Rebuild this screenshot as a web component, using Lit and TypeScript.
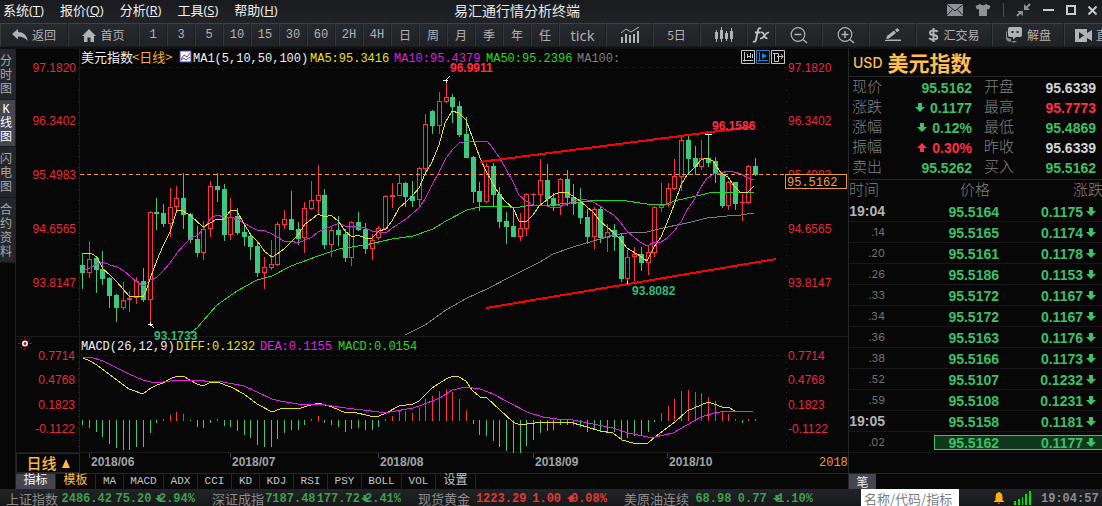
import { LitElement, html, svg, css } from "lit";
import { customElement, state } from "lit/decorators.js";
import { classMap } from "lit/directives/class-map.js";

type Candle = [string, number, number, number, number];

const STEP = 6.73;
const FIRST_X = 82.7;
const ZERO_Y = 420;

/* kind, high, body top, body bottom, low */
const CANDLES: Candle[] = [
  ["g", 253, 265, 273, 289], ["r", 241, 259, 273, 278], ["g", 257, 258, 270, 293], ["g", 251, 269, 279, 285],
  ["g", 277, 278, 296, 308], ["g", 294, 295, 308, 322], ["r", 282, 300, 308, 310], ["r", 291, 298, 300, 312],
  ["r", 277, 281, 298, 304], ["g", 268, 281, 300, 302], ["r", 211, 212, 300, 322], ["g", 198, 212, 214, 230],
  ["g", 204, 213, 224, 227], ["r", 188, 207, 224, 237], ["r", 186, 198, 207, 210], ["g", 173, 198, 215, 229],
  ["g", 213, 214, 240, 243], ["g", 226, 239, 253, 257], ["r", 221, 229, 253, 260], ["r", 181, 186, 229, 237],
  ["g", 173, 186, 190, 202], ["g", 184, 189, 235, 241], ["r", 198, 217, 235, 240], ["g", 208, 216, 233, 235],
  ["g", 225, 232, 237, 246], ["g", 234, 236, 247, 260], ["g", 241, 246, 273, 277], ["r", 257, 267, 273, 289],
  ["r", 240, 264, 268, 270], ["r", 222, 224, 265, 266], ["r", 210, 219, 225, 229], ["g", 191, 219, 230, 230],
  ["g", 222, 229, 239, 245], ["r", 202, 208, 238, 253], ["r", 181, 200, 209, 210], ["r", 165, 195, 201, 215],
  ["g", 189, 195, 245, 249], ["r", 226, 230, 245, 257], ["g", 216, 230, 235, 246], ["g", 229, 234, 258, 262],
  ["r", 221, 222, 258, 266], ["g", 212, 222, 230, 231], ["g", 223, 229, 249, 254], ["r", 234, 240, 249, 260],
  ["r", 226, 228, 238, 240], ["r", 195, 196, 229, 229], ["r", 183, 195, 197, 208], ["r", 174, 183, 196, 196],
  ["g", 182, 183, 197, 207], ["g", 181, 196, 201, 207], ["r", 167, 168, 200, 206], ["r", 114, 124, 169, 172],
  ["g", 110, 111, 126, 134], ["r", 92, 101, 126, 134], ["r", 80, 97, 102, 103], ["g", 94, 97, 107, 123],
  ["g", 101, 106, 135, 137], ["g", 117, 134, 158, 158], ["g", 156, 157, 192, 203], ["g", 182, 191, 202, 211],
  ["r", 163, 166, 202, 203], ["g", 163, 166, 195, 207], ["g", 187, 194, 222, 228], ["g", 212, 221, 227, 244],
  ["g", 209, 226, 237, 237], ["r", 213, 228, 237, 241], ["r", 193, 194, 229, 236], ["r", 193, 194, 195, 205],
  ["r", 159, 180, 195, 204], ["g", 164, 180, 199, 206], ["g", 193, 198, 206, 211], ["r", 178, 179, 206, 215],
  ["g", 170, 179, 198, 206], ["g", 184, 197, 204, 215], ["g", 188, 202, 218, 224], ["g", 209, 217, 237, 244],
  ["r", 207, 209, 237, 249], ["g", 206, 209, 238, 243], ["r", 224, 232, 238, 252], ["g", 224, 230, 237, 251],
  ["g", 234, 236, 279, 282], ["r", 250, 257, 279, 282], ["r", 247, 254, 257, 281], ["g", 247, 254, 263, 271],
  ["r", 245, 252, 263, 275], ["r", 206, 207, 253, 257], ["r", 183, 205, 208, 212], ["r", 183, 188, 205, 207],
  ["r", 159, 176, 189, 190], ["r", 136, 140, 177, 191], ["g", 136, 140, 159, 175], ["g", 146, 158, 167, 175],
  ["r", 140, 158, 167, 170], ["g", 134, 158, 163, 167], ["g", 157, 161, 174, 183], ["g", 172, 174, 206, 208],
  ["r", 181, 182, 206, 210], ["g", 182, 182, 204, 210], ["r", 194, 202, 203, 221], ["r", 165, 166, 203, 204],
  ["g", 158, 166, 175, 176],
];

/* end of each histogram bar, measured from the zero line */
const MACD = [
  425, 428, 432, 437, 444, 448, 450, 450, 447, 447, 433, 423, 419, 415, 412, 414, 421, 427, 428, 423, 419,
  426, 427, 431, 435, 438, 445, 447, 447, 439, 433, 430, 430, 425, 419, 416, 423, 425, 427, 432, 429, 428,
  430, 430, 427, 419, 416, 411, 411, 413, 408, 399, 396, 391, 389, 392, 399, 410, 424, 435, 436, 441, 447,
  451, 453, 453, 446, 440, 433, 431, 430, 425, 425, 425, 427, 432, 430, 432, 432, 432, 439, 438, 436, 435,
  432, 422, 413, 406, 399, 391, 390, 392, 393, 397, 401, 412, 414, 419, 423, 419, 419,
];

const MA5 =
  "83,254 89,253 92,254 97,257 103,269 110,275 117,282 129,296 143,297 146,291 150,279 157,260 163,246 170,232 177,210 183,211 191,216 203,227 217,219 224,219 231,210 237,211 244,224 251,235 258,242 265,252 272,257 277,254 284,249 291,242 298,235 305,224 312,219 318,214 325,217 331,215 339,222 345,231 352,237 358,235 365,238 372,238 379,231 386,229 392,221 399,208 406,202 413,195 419,188 425,174 432,162 439,145 445,123 452,111 459,113 466,120 473,139 480,158 486,171 492,182 499,194 506,202 513,208 519,221 526,222 533,215 539,206 553,195 560,192 567,192 580,201 593,212 600,221 607,227 614,233 620,239 627,248 640,256 647,261 654,247 661,237 667,223 674,205 681,185 687,175 694,168 701,160 707,158 713,161 721,173 728,177 734,186 741,193 748,192 754,186";
const MA10 =
  "83,271 90,268 97,264 103,262 110,265 117,267 124,271 131,277 137,282 144,286 150,280 157,277 163,271 170,263 177,253 184,245 191,238 198,235 204,228 211,218 217,215 224,217 231,217 237,219 244,223 251,227 257,230 265,231 272,234 284,241 291,241 298,243 312,237 318,232 325,229 339,223 345,226 358,227 365,228 372,231 386,233 392,228 406,219 419,208 425,199 432,185 439,172 446,158 453,149 459,143 470,141 487,141 492,147 499,157 506,169 513,182 519,195 526,201 533,205 540,205 547,206 553,208 560,207 567,204 574,201 580,199 587,200 593,202 600,206 607,211 614,215 620,222 627,231 634,237 640,242 647,246 654,242 661,242 667,238 674,231 681,222 687,210 694,200 701,187 707,178 714,174 721,173 728,171 734,172 741,174 748,178 754,180";
const MA50 =
  "190,333 197,328 203,321 217,305 237,291 257,280 272,276 291,266 318,256 339,249 365,245 392,239 413,236 433,229 446,221 467,210 479,207 492,206 510,207 520,207 533,205 550,205 560,204 580,202 600,200 620,200 647,204 667,204 674,201 687,198 701,195 713,192 754,192";
const MA100 =
  "405,335 425,325 446,310 467,298 487,289 510,277 530,267 540,262 553,254 573,247 593,241 614,235 627,233 647,232 663,228 687,223 707,218 727,216 741,215 754,213";
const DIFF =
  "83,358 90,361 97,365 110,375 129,389 143,394 151,388 157,385 163,383 170,379 177,376 183,376 190,380 197,384 203,386 211,382 218,382 225,385 231,387 244,394 257,404 272,412 280,409 292,408 298,409 307,406 319,403 332,407 346,413 353,412 370,416 379,416 386,413 399,406 413,404 419,401 425,395 432,388 446,379 453,376 459,377 466,381 472,390 480,397 487,398 500,410 513,422 520,425 535,423 560,422 573,423 587,427 600,431 613,433 622,440 633,443 648,443 655,437 667,428 675,422 687,411 701,405 708,402 714,404 722,407 728,407 735,411 742,412 748,411 753,411";
const DEA =
  "83,357 90,357 103,361 117,368 129,374 143,380 151,382 163,382 177,380 198,380 211,382 218,381 244,386 257,392 272,399 280,401 298,404 319,404 332,406 346,408 379,412 390,412 413,408 419,406 440,398 452,390 466,387 480,389 493,394 508,402 527,412 543,417 557,419 573,420 593,424 613,428 628,433 648,437 655,437 673,433 687,425 701,417 714,413 727,411 753,411";

const PRICE_AXIS: [string, number][] = [
  ["97.1820", 72], ["96.3402", 125], ["95.4983", 179], ["94.6565", 233], ["93.8147", 287],
];
const MACD_AXIS: [string, number][] = [["0.7714", 360], ["0.4768", 384], ["0.1823", 409], ["-0.1122", 433]];
const MONTHS: [string, number][] = [
  ["2018/06", 89], ["2018/07", 230], ["2018/08", 378], ["2018/09", 533], ["2018/10", 667],
];

const TICKS: [string, string, string][] = [
  ["19:04", "95.5164", "0.1175"], [".14", "95.5165", "0.1174"], [".20", "95.5161", "0.1178"],
  [".26", "95.5186", "0.1153"], [".33", "95.5172", "0.1167"], [".34", "95.5172", "0.1167"],
  [".36", "95.5163", "0.1176"], [".38", "95.5166", "0.1173"], [".52", "95.5107", "0.1232"],
  [".59", "95.5108", "0.1231"], ["19:05", "95.5158", "0.1181"], [".02", "95.5162", "0.1177"],
];

const QUOTES: [string, string, string, string][] = [
  ["现价", "95.5162", "down", ""], ["开盘", "95.6339", "flat", ""],
  ["涨跌", "0.1177", "down", "down"], ["最高", "95.7773", "up", ""],
  ["涨幅", "0.12%", "down", "down"], ["最低", "95.4869", "down", ""],
  ["振幅", "0.30%", "up", "up"], ["昨收", "95.6339", "flat", ""],
  ["卖出", "95.5262", "down", ""], ["买入", "95.5162", "down", ""],
];

const TICKER: [string, string, string, string, string][] = [
  ["上证指数", "2486.42", "75.20", "2.94%", "down"],
  ["深证成指", "7187.48", "177.72", "2.41%", "down"],
  ["现货黄金", "1223.29", "1.00", "0.08%", "up"],
  ["美原油连续", "68.98", "0.77", "1.10%", "down"],
];

const arrow = (dir: string) => html`<svg class="arrow" width="10" height="9" viewBox="0 0 10 9" aria-hidden="true">
  <path fill="currentColor" d=${dir === "up" ? "M5 0 L10 5 H7 V9 H3 V5 H0 Z" : "M3 0 H7 V4 H10 L5 9 L0 4 H3 Z"} />
</svg>`;

@customElement("menu-bar")
export class MenuBar extends LitElement {
  static styles = css`
    :host {
      display: grid;
      grid-template-columns: 1fr auto 1fr;
      align-items: center;
      height: 23px;
      padding: 0 5px 0 3px;
      box-sizing: border-box;
      background: linear-gradient(#191a1d, #222326);
      color: #f0f0f0;
      font: 13px/20px "Open Sans", "Noto Sans CJK SC", sans-serif;
    }
    nav { display: flex; gap: 16px; }
    nav a { color: inherit; text-decoration: none; white-space: nowrap; padding-bottom: 4px; }
    h1 { margin: 0; padding-right: 66px; font: 14px/20px "Noto Sans CJK SC", sans-serif; color: #e8e8e8; padding-bottom: 4px; }
    .tools { display: flex; justify-content: flex-end; align-items: center; gap: 12px; padding-bottom: 4px; }
    button { display: flex; border: 0; padding: 0; background: none; color: #c9c9cb; }
    .rule { width: 1px; height: 14px; background: #4a4b50; }
  `;

  render() {
    const menus = [["系统", "T"], ["报价", "Q"], ["分析", "R"], ["工具", "S"], ["帮助", "H"]];
    return html`
      <nav>${menus.map(([n, k]) => html`<a href="#">${n}(<u>${k}</u>)</a>`)}</nav>
      <h1>易汇通行情分析终端</h1>
      <div class="tools">
        <button aria-label="邮件"><svg width="16" height="12" viewBox="0 0 16 12"><path fill="#8f9196" d="M0 0H16V12H0Z" /><path fill="none" stroke="#222327" d="M0 .5L8 7L16 .5M0 11.5L5.5 5.5M16 11.5L10.500 5.500" /></svg></button>
        <button aria-label="皮肤"><svg width="16" height="14" viewBox="0 0 16 14"><path fill="#8f9196" d="M5 1Q8 3.500 11 1L15.500 3L14 6.500L12 6V13H4V6L2 6.500L.5 3Z" /></svg></button>
        <span class="rule"></span>
        <button aria-label="收起"><svg width="15" height="14" viewBox="0 0 15 14"><path fill="none" stroke="#8f9196" stroke-width="2" d="M14 1L10 5M1 13L5 9" /><path fill="#8f9196" d="M8 1V7H14ZM7 13V8H1Z" /></svg></button>
        <button aria-label="最小化"><svg width="11" height="10" viewBox="0 0 11 10"><path fill="currentColor" d="M0 4H11V6H0Z" /></svg></button>
        <button aria-label="最大化"><svg width="10" height="10" viewBox="0 0 10 10"><path fill="none" stroke="currentColor" stroke-width="2" d="M1 1H9V9H1Z" /></svg></button>
        <button aria-label="关闭"><svg width="9" height="9" viewBox="0 0 9 9"><path stroke="currentColor" stroke-width="2" d="M.5 .5L8.500 8.500M8.500 .5L.5 8.500" /></svg></button>
      </div>
    `;
  }
}

@customElement("tool-bar")
export class ToolBar extends LitElement {
  static styles = css`
    :host {
      display: flex;
      height: 26px;
      box-sizing: border-box;
      padding-bottom: 1px;
      background: #101113;
      overflow: hidden;
      border-bottom: 1px solid #101113;
    }
    button {
      flex: none;
      display: flex;
      align-items: center;
      justify-content: center;
      gap: 4px;
      box-sizing: border-box;
      width: 28px;
      height: 24px;
      padding: 0;
      border: 1px solid #1b1c1f;
      border-top-color: #404145;
      border-left-color: #37393d;
      background: linear-gradient(#26292e, #202226);
      color: #b2b2b2;
      font: 12px/20px "Noto Sans CJK SC", sans-serif;
      white-space: nowrap;
    }
    .mid { width: 47px; }
    .back { width: 68px; }
    .home { width: 71px; }
    .trade { width: 76px; }
    .explain { width: 72px; }
    .tick { font: 15px/20px "Open Sans", sans-serif; }
    .live { width: 76px; justify-content: flex-start; padding-left: 10px; }
    .num { font: 12px/20px "Liberation Mono", monospace; }
  `;

  render() {
    const numeric = ["1", "3", "5", "10", "15", "30", "60", "2H", "4H"];
    const spans = ["日", "周", "月", "季", "年", "任"];
    return html`
      <button class="back"><svg width="16" height="12" viewBox="0 0 16 12"><path fill="#b2b2b2" d="M0 5L6 0V3Q14 3 16 12Q12 7.500 6 7.500V10.500Z" /></svg>返回</button>
      <button class="home"><svg width="14" height="13" viewBox="0 0 14 13"><path fill="#b2b2b2" d="M7 0L14 7H12V13H8.500V8.500H5.500V13H2V7H0Z" /></svg>首页</button>
      ${numeric.map((n) => html`<button class="num">${n}</button>`)}
      ${spans.map((n) => html`<button>${n}</button>`)}
      <button class="mid tick">tick</button>
      <button class="mid" aria-label="指标图"><svg width="20" height="16" viewBox="0 0 20 16"><path fill="#b2b2b2" d="M1 10H3V16H1ZM5 7H7V16H5ZM9 8H11V16H9ZM13 7H15V16H13ZM17 4H19V16H17Z" /><path fill="none" stroke="#b2b2b2" d="M1 6L6 2L11 5L19 0" /></svg></button>
      <button class="mid">5日</button>
      <button class="mid" aria-label="K线"><svg width="20" height="16" viewBox="0 0 20 16"><path fill="#b2b2b2" d="M1 5H4V12H1ZM6 3H9V12H6ZM11 6H14V12H11ZM16 4H19V12H16Z" /><path stroke="#b2b2b2" d="M2.500 3V15M7.500 0V15M12.500 4V14M17.500 1V15" /></svg></button>
      <button aria-label="公式"><svg width="18" height="16" viewBox="0 0 18 16"><path fill="none" stroke="#c4c4c4" stroke-width="1.800" d="M9 1.500Q6.500 0 5.800 4L4.200 12Q3.600 15.500 1 14.500M3 5.500H8.500" /><path fill="none" stroke="#c4c4c4" stroke-width="1.600" d="M9 5.500Q11 4.500 12 8T15.500 11.500M17 5.500Q15 5 12.500 8.500T8 11.500" /></svg></button>
      <button class="mid" aria-label="缩小"><svg width="18" height="17" viewBox="0 0 18 17"><circle cx="8" cy="7.500" r="6.800" fill="none" stroke="#b2b2b2" stroke-width="1.200" /><path stroke="#b2b2b2" stroke-width="1.500" d="M4.500 7.500H11.500M13 12.500L17 16" /></svg></button>
      <button class="mid" aria-label="放大"><svg width="18" height="17" viewBox="0 0 18 17"><circle cx="8" cy="7.500" r="6.800" fill="none" stroke="#b2b2b2" stroke-width="1.200" /><path stroke="#b2b2b2" stroke-width="1.500" d="M4.500 7.500H11.500M8 4V11M13 12.500L17 16" /></svg></button>
      <button class="mid" aria-label="画线"><svg width="16" height="14" viewBox="0 0 16 14"><path fill="#b2b2b2" d="M1 11L2 8L9 2.500L11 5L4 10.500ZM10 1.800L12.500 0L14.500 2.500L12 4.300ZM6 11.500H16V13H0V12Z" /></svg></button>
      <button class="trade"><svg width="11" height="14" viewBox="0 0 11 14"><path fill="none" stroke="#b2b2b2" stroke-width="2" d="M9.500 4Q9 2.500 5.500 2.500T2 4.700T5.500 7T9.300 9.300T5.500 11.500T1.500 9.700M5.500 0V14" /></svg>汇交易</button>
      <button class="explain"><svg width="18" height="16" viewBox="0 0 18 16"><path fill="#8a8a8a" d="M2 4V9.500Q2 11.500 4.500 11.500H6V14H12L9 16L7 14.500H3L1 12V5Z" /><path fill="#b2b2b2" d="M5 0H15Q17 0 17 2V8Q17 10 15 10H11L8 12.500V10H5Q3 10 3 8V2Q3 0 5 0Z" /><path fill="#24262a" d="M6.500 4H8.500V6H6.500ZM11.500 4H13.500V6H11.500Z" /></svg>解盘</button>
      <button class="live"><svg width="17" height="13" viewBox="0 0 17 13"><path fill="#b2b2b2" d="M0 0H12V4L17 1V12L12 9V13H0Z" /><path fill="#24262a" d="M4 3L9 6.500L4 10Z" /></svg>直播</button>
    `;
  }
}

@customElement("price-chart")
export class PriceChart extends LitElement {
  static styles = css`
    :host { display: block; position: relative; }
    .plot { display: block; width: 100%; height: auto; }
    .axis { font: 12px "Liberation Sans", sans-serif; fill: #e8283c; }
    .mark { font: bold 12px "Liberation Sans", sans-serif; }
    .legend { font: 12px "Liberation Mono", "Noto Sans CJK SC", monospace; }
    .name { font: 13px "Noto Sans CJK SC", sans-serif; }
    .line { fill: none; stroke-width: 1; }
    .crisp { shape-rendering: crispEdges; }
    .modes { position: absolute; top: 1px; right: 63px; display: flex; gap: 1px; }
    .modes button { display: flex; padding: 0; border: 0; background: none; color: #c8c8c8; }
    .modes .on { color: #1b86d8; }
  `;

  private x(i: number) {
    return Math.round(FIRST_X + STEP * i - 0.5);
  }

  private candle(c: Candle, i: number) {
    const [kind, high, top, bottom, low] = c;
    const x = this.x(i);
    if (kind === "g")
      return svg`<path fill="#3cc87e" d="M${x} ${high}h1V${low}h-1ZM${x - 2} ${top}h5V${Math.max(bottom, top + 1)}h-5Z"/>`;
    if (bottom - top < 3)
      return svg`<path fill="#ff2f46" d="M${x} ${high}h1V${low}h-1ZM${x - 2} ${top}h5v${bottom - top}h-5Z"/>`;
    return svg`<path fill="#ff2f46" d="M${x} ${high}h1V${top}h-1ZM${x} ${bottom}h1V${low}h-1Z"/>
      <rect x=${x - 1.5} y=${top + 0.5} width="4" height=${bottom - top - 1} fill="none" stroke="#ff2f46"/>`;
  }

  private bar(end: number, i: number) {
    const up = end < ZERO_Y;
    return up
      ? svg`<rect x=${this.x(i)} y=${end} width="1" height=${ZERO_Y + 1 - end} fill="#ff2f46"/>`
      : svg`<rect x=${this.x(i)} y=${ZERO_Y} width="1" height=${end - ZERO_Y} fill="#3cc87e"/>`;
  }

  render() {
    return html`
      <svg class="plot" viewBox="16 49 832 404" role="img" aria-label="美元指数日线">
        <g class="crisp" stroke="#1c1c1c">
          <path d="M16 336.500H848M16 452.500H848M79.500 49V453" />
          <path stroke="#191919" stroke-dasharray="4 4" d="M80 67.500H786M80 355.500H786" />
          <path stroke="#303030" stroke-dasharray="1 10" d="M78.500 68V330M786.500 68V330" />
          <path stroke="#303030" stroke-dasharray="1 5" d="M78.500 356V450M786.500 356V450" />
        </g>
        ${PRICE_AXIS.map(([t, y]) => svg`<text class="axis" x="76" y=${y} text-anchor="end">${t}</text><text class="axis" x="788" y=${y}>${t}</text>`)}
        ${MACD_AXIS.map(([t, y]) => svg`<text class="axis" x="75" y=${y} text-anchor="end">${t}</text><text class="axis" x="788" y=${y}>${t}</text>`)}

        <g class="crisp">
          ${CANDLES.map((c, i) => this.candle(c, i))}
          ${MACD.map((v, i) => this.bar(v, i))}
          <path class="line" stroke="#f49a2e" stroke-dasharray="4 3" d="M80 174.500H786" />
          <polyline class="line" stroke="#7e7e7e" points=${MA100} />
          <polyline class="line" stroke="#20dc20" points=${MA50} />
          <polyline class="line" stroke="#dc20dc" points=${MA10} />
          <polyline class="line" stroke="#e8e020" points=${MA5} />
          <polyline class="line" stroke="#e8e020" points=${DIFF} />
          <polyline class="line" stroke="#e81ee8" points=${DEA} />
          <path fill="none" stroke="#ff0000" stroke-width="2" d="M480 162L750 127M486 308L776 259" />
          <path stroke="#fff" d="M443 80.500H448M446.500 79V83M447 79L450 76M148 324.500H153M150.500 322V326M151 325L154 328M705 134.500H712M627.500 281V284" />
        </g>

        <text class="mark" fill="#ff2f46" x="450" y="72">96.9911</text>
        <text class="mark" fill="#ff2f46" x="712" y="130">96.1586</text>
        <text class="mark" fill="#34b878" x="154" y="340">93.1733</text>
        <text class="mark" fill="#34b878" x="632" y="295">93.8082</text>

        <rect x="785.500" y="174.500" width="61" height="14" fill="#070707" stroke="#f49a2e" />
        <text class="legend" fill="#f4a040" x="787" y="186">95.5162</text>

        <text class="name" fill="#f0f0f0" x="81" y="62">美元指数</text>
        <text class="name" fill="#f0b040" x="132" y="62">&lt;日线&gt;</text>
        <rect x="180" y="51" width="11" height="11" fill="#fff" stroke="#3050a0" />
        <path fill="none" stroke="#e02020" d="M181 59L184 55L187 57L190 53" />
        <path fill="none" stroke="#3050c0" d="M181 60L184 58L186 60L190 57" />
        <text class="legend" fill="#f0f0f0" x="193" y="62">MA1(5,10,50,100)</text>
        <text class="legend" fill="#e8e020" x="310" y="62">MA5:95.3416</text>
        <text class="legend" fill="#dc20dc" x="394" y="62">MA10:95.4379</text>
        <text class="legend" fill="#20dc20" x="486" y="62">MA50:95.2396</text>
        <text class="legend" fill="#7e7e7e" x="577" y="62">MA100:</text>

        <text class="legend" fill="#f0f0f0" x="81" y="350">MACD(26,12,9)</text>
        <text class="legend" fill="#e8e020" x="176" y="350">DIFF:0.1232</text>
        <text class="legend" fill="#e81ee8" x="260" y="350">DEA:0.1155</text>
        <text class="legend" fill="#20dc20" x="338" y="350">MACD:0.0154</text>

        <circle cx="25" cy="343.500" r="3" fill="#fff" />
        <circle cx="25" cy="343.500" r="1.500" fill="#f00" />
        <path stroke="#f00" d="M25 337V339M25 348V350M18.500 343.500H20.500M29.500 343.500H31.500M20.500 339L21.800 340.300M28.200 346.700L29.500 348M29.500 339L28.200 340.300M21.800 346.700L20.500 348" />
      </svg>
      <div class="modes">
        <button aria-label="模式一"><svg width="14" height="14" viewBox="0 0 14 14"><path fill="none" stroke="currentColor" d="M.5 .5H13.500V13.500H.5ZM3.500 2V11.500M2 10.500H12M6.500 4V8M9.500 3V8M6 6.500H9M11.500 4V8" /></svg></button>
        <button class="on" aria-label="模式二"><svg width="14" height="14" viewBox="0 0 14 14"><path fill="none" stroke="currentColor" d="M.5 .5H13.500V13.500H.5ZM3.500 2V11.500M2 10.500H12" /><path fill="currentColor" d="M6 3L11 6L6 9Z" /></svg></button>
        <button aria-label="模式三"><svg width="14" height="14" viewBox="0 0 14 14"><path fill="none" stroke="currentColor" d="M.5 .5H13.500V13.500H.5ZM3.500 3V11.500H7.500V3.500H2M6 6.500H12M10 4L12 6.500L10 9" /></svg></button>
      </div>
    `;
  }
}

@customElement("quote-panel")
export class QuotePanel extends LitElement {
  static styles = css`
    :host {
      display: flex;
      flex-direction: column;
      box-sizing: border-box;
      border-left: 1px solid #262626;
      background: #070707;
      font: 14px/20px "Noto Sans CJK SC", sans-serif;
      color: #808080;
      overflow: hidden;
    }
    .up { color: #ff2f46; }
    .down { color: #3cc068; }
    .flat { color: #d4d4d4; }
    h2 {
      display: flex;
      align-items: center;
      gap: 5px;
      margin: 0;
      padding-left: 4px;
      height: 27px;
      border-bottom: 1px solid #262626;
      color: #ffbe50;
      font: bold 21px/25px "Noto Sans CJK SC", sans-serif;
    }
    h2 small { font: 500 14px/25px "Inter", sans-serif; }
    dl {
      display: grid;
      grid-template-columns: 36px 84px 1fr 78px;
      margin: 0;
      padding: 0 6px 2px 3px;
      border-bottom: 1px solid #262626;
    }
    dt { font-weight: 300; font-size: 15px; height: 20px; line-height: 18px; }
    dt.second { padding-left: 12px; }
    dd {
      display: flex;
      justify-content: flex-end;
      align-items: center;
      gap: 5px;
      margin: 0;
      height: 20px;
      padding-top: 1px;
      box-sizing: border-box;
      font: bold 14px/20px "Liberation Sans", sans-serif;
    }
    table { width: 100%; border-collapse: collapse; table-layout: fixed; }
    th { padding: 0; height: 21px; line-height: 18px; font-size: 15px; font-weight: 300; text-align: left; white-space: nowrap; vertical-align: top; }
    th.price { padding-left: 26px; }
    th.change { padding-left: 74px; }
    td { padding: 0; height: 20px; border-bottom: 1px solid #171717; text-align: right; }
    .time { width: 36px; }
    .gap { width: 49px; }
    .price { width: 65px; }
    .change { width: 84px; }
    td.time { font: 11px/18px "Inter", "Liberation Sans", sans-serif; color: #707070; }
    td.full { font: bold 14px/20px "Liberation Sans", sans-serif; color: #b4b4b4; }
    .cell { font: bold 14px/15px "Liberation Sans", sans-serif; color: #3cc068; height: 13px; border: 1px solid transparent; border-width: 1px 0; }
    .dir .cell { text-align: left; padding-left: 3px; line-height: 12px; }
    .latest .cell { background: #10381a; border-color: #3cc068; }
    .latest .price .cell { border-left-width: 1px; }
    .foot { display: flex; margin-top: auto; border-top: 1px solid #262626; }
    .foot button { width: 27px; height: 15px; padding: 0; border: 0; background: #44454f; color: #f0f0f0; font: 12px/14px "Noto Sans CJK SC", sans-serif; }
  `;

  render() {
    return html`
      <h2><small>USD</small>美元指数</h2>
      <dl>
        ${QUOTES.map(([label, value, tone, dir], i) => html`
          <dt class=${classMap({ second: i % 2 === 1 })}>${label}</dt>
          <dd class=${tone}>${dir ? arrow(dir) : ""}${value}</dd>`)}
      </dl>
      <table>
        <colgroup><col class="time" /><col class="gap" /><col class="price" /><col class="change" /><col /></colgroup>
        <thead>
          <tr><th class="time" colspan="2">时间</th><th class="price">价格</th><th class="change">涨跌</th><th></th></tr>
        </thead>
        <tbody>
          ${TICKS.map(([time, price, change], i) => html`
            <tr class=${classMap({ latest: i === TICKS.length - 1 })}>
              <td class=${classMap({ time: true, full: time.includes(":") })}>${time}</td>
              <td></td>
              <td class="price"><div class="cell">${price}</div></td>
              <td class="change"><div class="cell">${change}</div></td>
              <td class="dir"><div class="cell">${arrow("down")}</div></td>
            </tr>`)}
        </tbody>
      </table>
      <div class="foot"><button>笔</button></div>
    `;
  }
}

@customElement("status-bar")
export class StatusBar extends LitElement {
  static styles = css`
    :host {
      display: flex;
      align-items: center;
      height: 17px;
      padding: 0 4px 0 6px;
      box-sizing: border-box;
      overflow: hidden;
      background: linear-gradient(#222326, #17181a);
      font: bold 12px/20px "Liberation Mono", monospace;
      color: #8c8c8c;
    }
    .items { display: flex; gap: 17px; flex: 1; }
    .item { display: flex; flex: none; width: 189px; height: 20px; justify-content: space-between; align-items: center; white-space: nowrap; }
    .name { font: 13px/18px "Noto Sans CJK SC", sans-serif; }
    .pct { display: flex; align-items: center; }
    .pct .arrow { width: 8px; height: 11px; margin-right: -4px; }
    .up { color: #e03a34; }
    .down { color: #3f9e50; }
    .side { display: flex; align-items: center; gap: 9px; width: 237px; flex: none; }
    input { box-sizing: border-box; width: 98px; height: 17px; margin-right: 25px; padding: 2px 3px 0; border: 0; background: #fff; font: 13px/15px "Noto Sans CJK SC", sans-serif; }
    input::placeholder { color: #7c7c7c; opacity: 1; }
    svg { flex: none; }
    .items, time { padding-top: 2px; }
  `;

  render() {
    return html`
      <div class="items">
        ${TICKER.map(([name, price, change, pct, dir]) => html`
          <div class="item">
            <span class="name">${name}</span>
            <span class=${dir}>${price}</span>
            <span class=${dir}>${change}</span>
            <span class="pct ${dir}">${arrow(dir)}${pct}</span>
          </div>`)}
      </div>
      <div class="side">
        <input type="text" placeholder="名称/代码/指标" aria-label="名称/代码/指标" />
        <svg width="12" height="12" viewBox="0 0 12 12"><path fill="#ffae18" d="M6 0Q9.500 1 9.500 5V8L11.500 10H.5L2.500 8V5Q2.500 1 6 0Z" /><path fill="#e03020" d="M5 10.500H7V12H5Z" /></svg>
        <svg width="18" height="14" viewBox="0 0 18 14"><path fill="#00e800" d="M0 10H2V14H0ZM4 8H6V14H4ZM8 6H9V14H8ZM11 3H13V14H11ZM15 0H17V14H15Z" /></svg>
        <time>19:04:57</time>
      </div>
    `;
  }
}

@customElement("app-root")
export class AppRoot extends LitElement {
  @state() private view = 1;

  static styles = css`
    :host {
      display: flex;
      flex-direction: column;
      min-height: 100vh;
      background: #070707;
      overflow: hidden;
      font: 12px/14px "Noto Sans CJK SC", sans-serif;
    }
    main { flex: 1; display: grid; grid-template-columns: 16px minmax(0, 1fr) 254px; }
    .rail { display: flex; flex-direction: column; border-right: 1px solid #222226; }
    .rail button {
      box-sizing: border-box;
      width: 15px;
      padding: 6px 3px 2px 0;
      border: 0;
      border-bottom: 1px solid #17181a;
      background: #24262b;
      color: #a8a8a8;
      font: 12px/14px "Liberation Mono", "Noto Sans CJK SC", sans-serif;
      word-break: break-all;
    }
    .rail .active { background: #44454f; color: #fff; padding: 3px 3px 1px 0; }
    .center { display: flex; flex-direction: column; }
    .dates { display: flex; height: 20px; }
    .dates button {
      flex: none;
      display: flex;
      align-items: center;
      justify-content: center;
      gap: 5px;
      width: 64px;
      padding: 0;
      border: 1px solid #262626;
      background: #070707;
      color: #ffb84a;
      font: 500 15px/16px "Noto Sans CJK SC", sans-serif;
    }
    .scale { flex: 1; min-width: 0; height: 20px; }
    .month { font: bold 12px "Liberation Sans", sans-serif; fill: #a0a4a8; }
    .year { font: 12px "Liberation Mono", monospace; fill: #f49a2e; }
    .tabs { display: flex; margin-top: auto; height: 16px; box-sizing: border-box; border-top: 1px solid #262626; }
    .tabs button {
      box-sizing: border-box;
      width: 40px;
      padding: 0;
      border: 0;
      border-right: 1px solid #262626;
      background: none;
      color: #c4c4c4;
      font: 11px/15px "Liberation Mono", "Noto Sans CJK SC", monospace;
    }
    .tabs .n2 { width: 28px; }
    .tabs .n3 { width: 34px; }
    .tabs .zh { font-size: 12px; }
    .tabs .on { background: #44454f; color: #fff; }
    .tabs .gold { color: #ffbe50; }
  `;

  render() {
    const rail = ["分时图", "K线图", "闪电图", "合约资料"];
    const tabs = ["MA", "MACD", "ADX", "CCI", "KD", "KDJ", "RSI", "PSY", "BOLL", "VOL"];
    return html`
      <menu-bar></menu-bar>
      <tool-bar></tool-bar>
      <main>
        <div class="rail">
          ${rail.map((t, i) => html`<button class=${classMap({ active: this.view === i })} @click=${() => (this.view = i)}>${t}</button>`)}
        </div>
        <div class="center">
          <price-chart></price-chart>
          <div class="dates">
            <button>日线<svg width="8" height="9" viewBox="0 0 8 9" aria-hidden="true"><path fill="currentColor" d="M4 0L8 9H0Z" /></svg></button>
            <svg class="scale" viewBox="80 453 768 20" preserveAspectRatio="xMinYMin meet">
              ${MONTHS.map(([t, x]) => svg`<path stroke="#444" d="M${x + 0.5} 453V458"/><text class="month" x=${x + 2} y="466">${t}</text>`)}
              <text class="year" x="819" y="466">2018</text>
            </svg>
          </div>
          <div class="tabs">
            <button class="zh on">指标</button>
            <button class="zh gold">模板</button>
            ${tabs.map((t) => html`<button class="n${t.length}">${t}</button>`)}
            <button class="zh">设置</button>
          </div>
        </div>
        <quote-panel></quote-panel>
      </main>
      <status-bar></status-bar>
    `;
  }
}
